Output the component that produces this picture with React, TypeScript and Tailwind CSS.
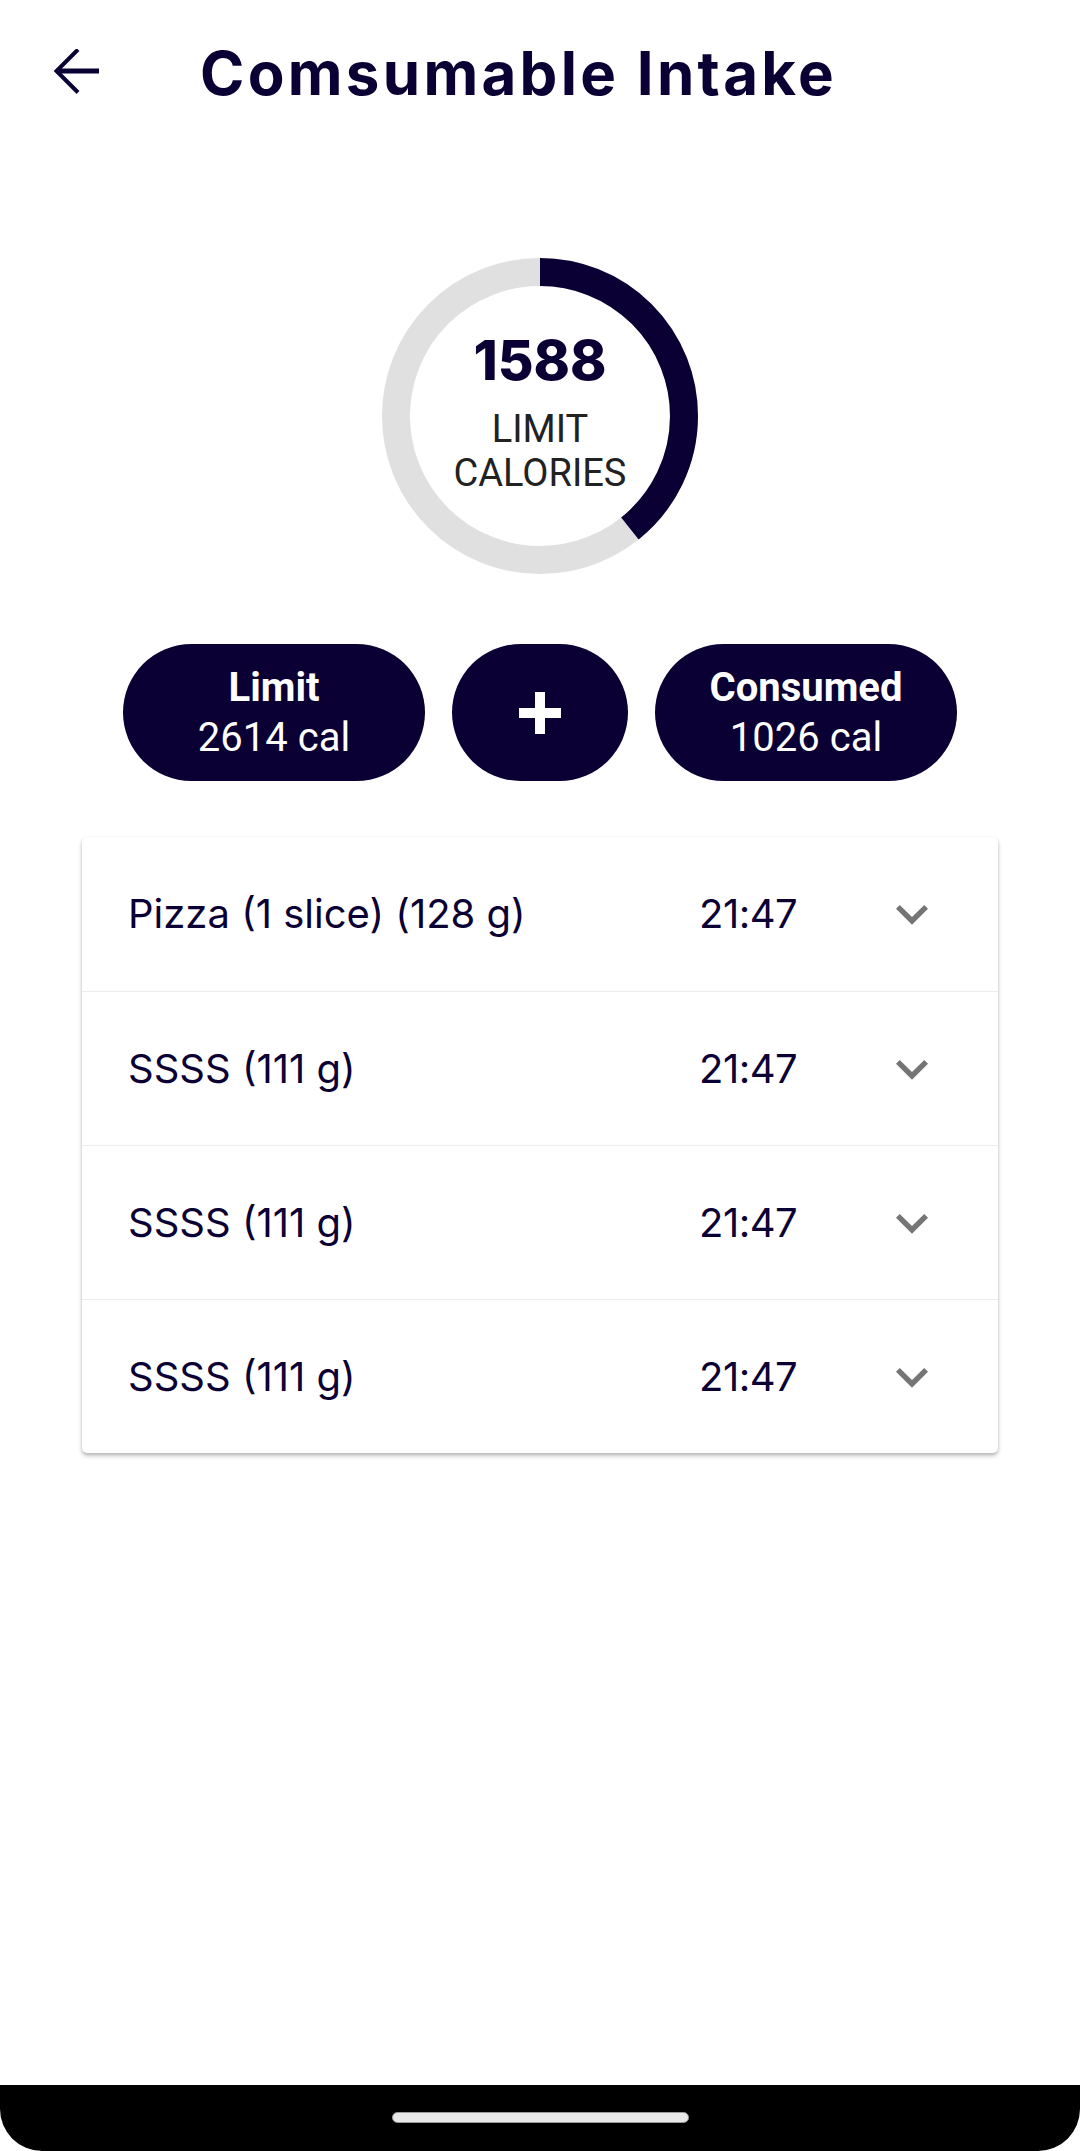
import React from "react";

const NAVY = "#0b0034";

function BackArrow() {
  return (
    <svg width="48" height="48" viewBox="0 0 48 48" fill="none">
      <path d="M46 22 H5" stroke={NAVY} strokeWidth="5" />
      <path d="M25 0.5 L3.5 22 L25 43.5" stroke={NAVY} strokeWidth="4" strokeLinejoin="miter" />
    </svg>
  );
}

function Chevron() {
  return (
    <svg width="64" height="64" viewBox="0 0 24 24" fill="#757575">
      <path d="M16.59 8.59 12 13.17 7.41 8.59 6 10l6 6 6-6z" />
    </svg>
  );
}

function Ring({ value, total }: { value: number; total: number }) {
  const r = 144;
  const c = 2 * Math.PI * r;
  const frac = value / total;
  return (
    <div className="relative w-[316px] h-[316px] flex items-center justify-center">
      <svg width="316" height="316" viewBox="0 0 316 316" className="absolute inset-0">
        <circle cx="158" cy="158" r={r} fill="none" stroke="#e0e0e0" strokeWidth="28" />
        <circle
          cx="158"
          cy="158"
          r={r}
          fill="none"
          stroke={NAVY}
          strokeWidth="28"
          strokeDasharray={`${frac * c} ${c}`}
          transform="rotate(-90 158 158)"
        />
      </svg>
      <div className="relative flex flex-col items-center pb-[8px]">
        <div
          className="text-[55px] leading-[60px] font-extrabold text-[#0b0034]"
          style={{ fontFamily: "Inter, sans-serif" }}
        >
          1588
        </div>
        <div
          className="mt-[17px] text-[38px] leading-[44px] text-[#222222] text-center"
          style={{ fontFamily: "Roboto, sans-serif" }}
        >
          LIMIT
          <br />
          CALORIES
        </div>
      </div>
    </div>
  );
}

function Pill({ title, sub }: { title: string; sub: string }) {
  return (
    <div
      className="w-[302px] h-[137px] rounded-full bg-[#0b0034] flex flex-col items-center justify-center text-white"
      style={{ fontFamily: "Roboto, sans-serif" }}
    >
      <div className="text-[40px] leading-[50px] font-bold">{title}</div>
      <div className="text-[40px] leading-[50px]">{sub}</div>
    </div>
  );
}

const items = [
  "Pizza (1 slice) (128 g)",
  "SSSS (111 g)",
  "SSSS (111 g)",
  "SSSS (111 g)",
];

export default function App() {
  return (
    <div className="w-[1080px] h-[2151px] bg-white flex flex-col overflow-hidden">
      <div className="h-[146px] flex items-center pl-[53px]">
        <BackArrow />
        <div
          className="ml-[99px] text-[60px] leading-none font-bold tracking-[3.3px] text-[#0b0034]"
          style={{ fontFamily: "Inter, sans-serif" }}
        >
          Comsumable Intake
        </div>
      </div>

      <div className="mt-[112px] flex justify-center">
        <Ring value={1026} total={2614} />
      </div>

      <div className="mt-[70px] flex justify-center gap-[27px]">
        <Pill title="Limit" sub="2614 cal" />
        <div className="w-[176px] h-[137px] rounded-full bg-[#0b0034] flex items-center justify-center">
          <svg width="42" height="42" viewBox="0 0 42 42">
            <rect x="0" y="16" width="42" height="10" fill="white" />
            <rect x="16" y="0" width="10" height="42" fill="white" />
          </svg>
        </div>
        <Pill title="Consumed" sub="1026 cal" />
      </div>

      <div className="mt-[56px] mx-auto w-[916px] rounded-[5px] bg-white shadow-[0_3px_4px_rgba(0,0,0,0.22),0_1px_3px_rgba(0,0,0,0.12)]">
        {items.map((t, i) => (
          <div
            key={i}
            className={`h-[154px] flex items-center pl-[46px] pr-[54px] ${
              i > 0 ? "border-t border-[#ececec]" : ""
            }`}
          >
            <div
              className="flex-1 text-[40px] text-[#0b0034]"
              style={{ fontFamily: "Inter, sans-serif" }}
            >
              {t}
            </div>
            <div
              className="w-[181px] text-[40px] tracking-[-0.5px] text-[#0b0034]"
              style={{ fontFamily: "Inter, sans-serif" }}
            >
              21:47
            </div>
            <Chevron />
          </div>
        ))}
      </div>

      <div className="mt-auto h-[66px] bg-black rounded-b-[42px] flex justify-center pt-[27px]">
        <div className="w-[297px] h-[11px] rounded-full bg-[#e8e8e8] border border-[#9a9a9a]" />
      </div>
    </div>
  );
}
